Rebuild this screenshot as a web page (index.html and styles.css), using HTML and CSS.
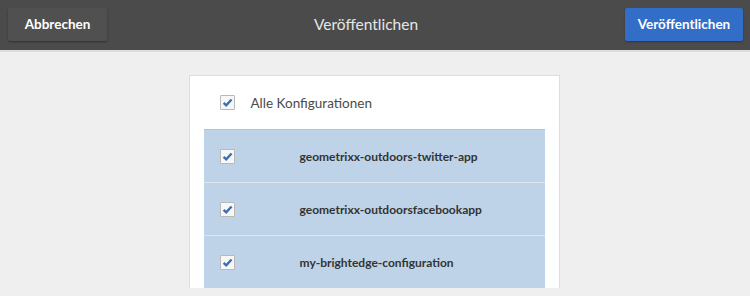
FILE: index.html
```html
<!DOCTYPE html>
<html lang="de">
<head>
  <meta charset="UTF-8" />
  <title>Veröffentlichen</title>
  <link rel="stylesheet" href="styles.css">
</head>
<body>

  <header class="topbar">
    <button class="btn btn-quiet">Abbrechen</button>
    <div class="title">Veröffentlichen</div>
    <button class="btn btn-primary">Veröffentlichen</button>
  </header>

  <main class="page">
    <div class="card">
      <label class="all-row">
        <span class="check"><svg viewBox="0 0 14 14"><path d="M2.8 7.4 L5.6 10 L11.4 3.8" /></svg></span>
        <span class="all-label">Alle Konfigurationen</span>
      </label>

      <ul class="config-list">
        <li class="config-row">
          <span class="check"><svg viewBox="0 0 14 14"><path d="M2.8 7.4 L5.6 10 L11.4 3.8" /></svg></span>
          <span class="config-name">geometrixx-outdoors-twitter-app</span>
        </li>
        <li class="config-row">
          <span class="check"><svg viewBox="0 0 14 14"><path d="M2.8 7.4 L5.6 10 L11.4 3.8" /></svg></span>
          <span class="config-name">geometrixx-outdoorsfacebookapp</span>
        </li>
        <li class="config-row">
          <span class="check"><svg viewBox="0 0 14 14"><path d="M2.8 7.4 L5.6 10 L11.4 3.8" /></svg></span>
          <span class="config-name">my-brightedge-configuration</span>
        </li>
      </ul>
    </div>
  </main>

</body>
</html>
```

FILE: styles.css
```css
body {
  margin: 0;
  font-family: Lato, 'Open Sans', 'Liberation Sans', sans-serif;
  background: #efefef;
  height: 296px;
  overflow: hidden;
}

.topbar {
  height: 50px;
  background: #4b4b4b;
  border-bottom: 2px solid #dcdcdc;
  display: flex;
  align-items: center;
  justify-content: space-between;
  padding: 0 7px 0 8px;
}

.btn {
  height: 33px;
  border: none;
  border-radius: 2px;
  font-family: inherit;
  font-size: 13.5px;
  font-weight: 700;
  color: #fff;
  cursor: pointer;
  margin-top: -2px;
}

.btn-quiet {
  width: 99px;
  background: #505050;
  box-shadow: 0 1px 2px rgba(0, 0, 0, 0.35);
}

.btn-primary {
  width: 118px;
  background: #326ec8;
  box-shadow: 0 1px 2px rgba(0, 0, 0, 0.3);
}

.title {
  font-size: 15.5px;
  color: #e6e6e6;
  margin-top: -3px;
}

.page {
  padding-top: 23px;
}

.card {
  width: 341px;
  margin: 0 auto;
  padding: 0 14px;
  background: #fff;
  border: 1px solid #dedede;
  border-bottom: none;
  position: relative;
  left: -1px;
}

.all-row {
  height: 53px;
  display: flex;
  align-items: center;
  padding-left: 16px;
}

.all-label {
  margin-left: 16px;
  font-size: 13.5px;
  color: #4b4b4b;
}

.config-list {
  list-style: none;
  margin: 0;
  padding: 0;
  background: #bed3e7;
  border-top: 1px solid #b0c6dc;
}

.config-row {
  height: 52px;
  display: flex;
  align-items: center;
  padding-left: 16px;
  border-bottom: 1px solid #dbe7f2;
}

.config-row:last-child {
  border-bottom: none;
}

.config-name {
  margin-left: 65px;
  font-size: 12px;
  font-weight: 700;
  color: #333;
}

.check {
  width: 13px;
  height: 13px;
  border: 1px solid #b9b9b9;
  background: #f7f7f7;
  border-radius: 1px;
  display: inline-flex;
}

.check svg {
  width: 13px;
  height: 13px;
}

.check path {
  fill: none;
  stroke: #3b6fae;
  stroke-width: 2.6;
}
```
